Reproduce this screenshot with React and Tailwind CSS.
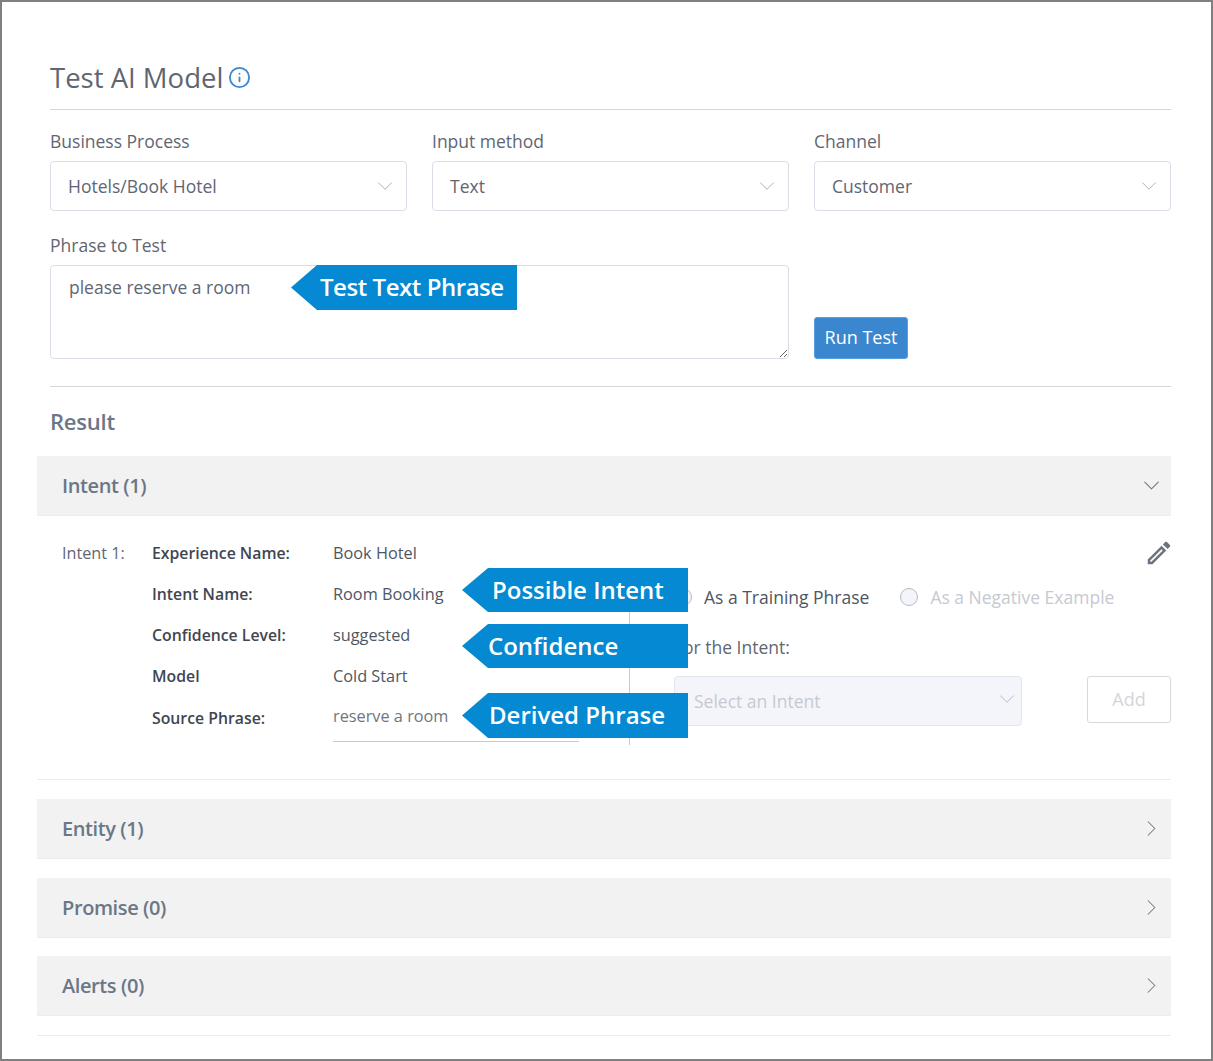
import { ChevronDown, ChevronRight, Info } from 'lucide-react'
import { MdOutlineEdit } from 'react-icons/md'

const DETAILS = [
  ['Experience Name:', 'Book Hotel'],
  ['Intent Name:', 'Room Booking'],
  ['Confidence Level:', 'suggested'],
  ['Model', 'Cold Start'],
]

function Select({ label, value }) {
  return (
    <div className="flex-1">
      <div className="text-[17.5px] leading-[24px] text-[#5f6672]">{label}</div>
      <div className="mt-[8px] h-[50px] flex items-center justify-between pl-[17px] pr-[8px] bg-white border border-[#dcdde6] rounded-[4px]">
        <span className="text-[17.5px] text-[#5f6672]">{value}</span>
        <ChevronDown className="w-[26px] h-[26px] text-[#a9afbb]" strokeWidth={0.9} />
      </div>
    </div>
  )
}

function Header({ title, open, className = '' }) {
  const Icon = open ? ChevronDown : ChevronRight
  return (
    <div className={`-ml-[13px] h-[60px] flex items-center justify-between pl-[25px] pr-[6px] bg-[#f2f2f3] border-b border-[#ebebf3] ${className}`}>
      <span className="text-[20px] tracking-[-0.4px] font-semibold text-[#6b7786]">{title}</span>
      <Icon className="w-[27px] h-[27px] text-[#6b7786]" strokeWidth={0.9} />
    </div>
  )
}

function Callout({ text, className }) {
  return (
    <div className={`absolute w-[226px] flex items-center whitespace-nowrap bg-[#0489d2] text-white text-[24px] font-semibold [clip-path:polygon(0_50%,26px_0,100%_0,100%_100%,26px_100%)] ${className}`}>
      {text}
    </div>
  )
}

export default function App() {
  return (
    <div className="relative w-[1213px] h-[1061px] overflow-hidden bg-white border-2 border-[#808080] pl-[48px] pr-[40px] font-['Open_Sans',sans-serif]">
      <div className="h-[108px] flex items-center gap-[5px] pt-[45px] border-b border-[#d5d5da]">
        <h1 className="text-[27.5px] text-[#5f6672]">Test AI Model</h1>
        <Info className="w-[23px] h-[23px] -mt-[2px] text-[#3a87cf]" strokeWidth={1.9} />
      </div>

      <div className="flex gap-[25px] mt-[19px]">
        <Select label="Business Process" value="Hotels/Book Hotel" />
        <Select label="Input method" value="Text" />
        <Select label="Channel" value="Customer" />
      </div>

      <div className="flex gap-[25px] mt-[22px] pb-[27px] border-b border-[#d5d5da]">
        <div className="w-[739px]">
          <div className="text-[17.5px] leading-[24px] text-[#5f6672]">Phrase to Test</div>
          <textarea
            className="block mt-[8px] w-full h-[94px] px-[18px] py-[8px] text-[17.5px] text-[#5f6672] bg-white border border-[#dcdde6] rounded-[4px]"
            defaultValue="please reserve a room"
          />
        </div>
        <button className="self-end h-[42px] w-[94px] pb-[1px] text-[18px] text-white bg-[#3a87cf] border border-[#5a9fe0] rounded-[3px]">Run Test</button>
      </div>

      <div className="mt-[18px] mb-[19px] text-[22px] tracking-[-0.2px] leading-[32px] font-semibold text-[#6b7786]">Result</div>

      <Header title="Intent (1)" open />
      <div className="-ml-[13px] h-[264px] flex pl-[25px] pt-[25px] border-b border-[#ebebf3]">
        <div className="w-[90px] text-[16.2px] leading-[24px] text-[#5f6672]">Intent 1:</div>
        <div className="w-[181px] text-[15.8px] font-semibold text-[#3f4652]">
          {DETAILS.map(([label]) => (
            <div key={label} className="h-[41px] leading-[24px]">{label}</div>
          ))}
          <div className="leading-[24px] pt-[1px]">Source Phrase:</div>
        </div>
        <div className="w-[246px] text-[16.3px] text-[#4f5662]">
          {DETAILS.map(([label, value]) => (
            <div key={label} className="h-[41px] leading-[24px]">{value}</div>
          ))}
          <div className="h-[38px] leading-[24px] -mt-[1px] text-[#6f7682] border-b border-[#c9c9ce]">reserve a room</div>
        </div>
        <div className="ml-[50px] flex-1 flex flex-col">
          <div className="flex justify-end h-[36px] -mt-[3px]">
            <MdOutlineEdit className="w-[30px] h-[30px] -mr-[3px] text-[#6b7380]" />
          </div>
          <div className="h-[171px] pl-[44px] pt-[9px] border-l border-[#c9c9ce]">
            <div className="flex items-center text-[17.5px] h-[28px]">
              <span className="w-[18px] h-[18px] rounded-full border border-[#b6bac4] bg-[#f4f5fa]" />
              <span className="ml-[12px] text-[#4f5662]">As a Training Phrase</span>
              <span className="ml-[31px] w-[18px] h-[18px] rounded-full border border-[#b6bac4] bg-[#f4f5fa]" />
              <span className="ml-[12px] text-[#c6c9d2]">As a Negative Example</span>
            </div>
            <div className="mt-[24px] text-[17.5px] leading-[24px] text-[#5f6672]">For the Intent:</div>
            <div className="mt-[17px] flex justify-between items-start">
              <div className="w-[348px] h-[50px] flex items-center justify-between pl-[19px] pr-[1px] bg-[#f4f5fa] border border-[#e4e5ee] rounded-[4px]">
                <span className="text-[17.5px] text-[#c6c9d2]">Select an Intent</span>
                <ChevronDown className="w-[26px] h-[26px] -mt-[4px] text-[#b6bac4]" strokeWidth={0.9} />
              </div>
              <button className="w-[84px] h-[47px] text-[18px] text-[#d3d5da] bg-white border border-[#d8d9de] rounded-[3px]">Add</button>
            </div>
          </div>
        </div>
      </div>

      <Header title="Entity (1)" className="mt-[19px]" />
      <Header title="Promise (0)" className="mt-[19px]" />
      <Header title="Alerts (0)" className="mt-[18px]" />
      <div className="-ml-[13px] mt-[19px] border-b border-[#ebebf3]" />

      <Callout text="Test Text Phrase" className="left-[289px] top-[263px] h-[45px] pl-[29px] pb-[2px] tracking-[-0.45px]" />
      <Callout text="Possible Intent" className="left-[460px] top-[566px] h-[44px] pl-[30px]" />
      <Callout text="Confidence" className="left-[460px] top-[622px] h-[44px] pl-[26px]" />
      <Callout text="Derived Phrase" className="left-[460px] top-[691px] h-[45px] pl-[27px] pb-[2px]" />
    </div>
  )
}
